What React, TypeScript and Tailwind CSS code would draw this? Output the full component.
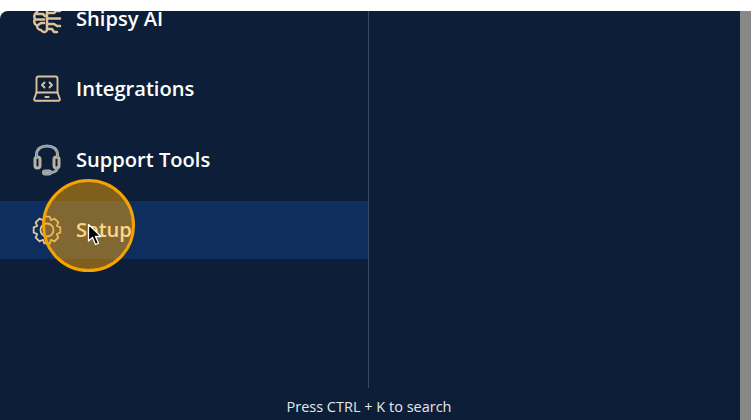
const items = [
  { label: "Shipsy AI", icon: <BrainIcon /> },
  { label: "Integrations", icon: <LaptopIcon /> },
  { label: "Support Tools", icon: <HeadsetIcon /> },
  { label: "Setup", icon: <GearIcon />, active: true },
];

function BrainIcon() {
  return (
    <svg width="30" height="30" viewBox="0 0 30 30" fill="none" stroke="#dcc29c" strokeWidth="2.500" strokeLinecap="round" strokeLinejoin="round">
      <path d="M15 4H9.500C7 4 5 6 5 8.500 2.500 9.500 1.500 12.500 3 15c-1.500 2.500-.5 5.500 2 6.500C5 24 7 26 9 26c1 2 3.500 2.500 5 1.500 1-.5 1-1.500 1-2.500V4z" />
      <path d="M5 10h6l2 2M4 15.500h8M6 21l3-2 3 0" />
      <path d="M15 9h7l2-2h4M15 14.500h13M15 20h7l3 2h3M15 25h5l2 3h3" />
    </svg>
  );
}

function LaptopIcon() {
  return (
    <svg width="30" height="30" viewBox="0 0 30 30" fill="none" stroke="#dcc29c" strokeWidth="1.900" strokeLinecap="round" strokeLinejoin="round">
      <path d="M4.500 19V4.500a2 2 0 0 1 2-2h17a2 2 0 0 1 2 2V19" />
      <path d="M4.500 18.500h21l2.200 6a1.500 1.500 0 0 1-1.400 2.300H3.700a1.500 1.500 0 0 1-1.400-2.300z" />
      <path d="M12.500 8.500 10 11l2.500 2.500M17.500 8.500 20 11l-2.500 2.500" />
      <path d="M13.500 23h3" strokeWidth="2.200" />
    </svg>
  );
}

function HeadsetIcon() {
  return (
    <svg width="30" height="32" viewBox="0 0 30 32" fill="none" strokeLinecap="round" strokeLinejoin="round">
      <g stroke="#b5b1a3" strokeWidth="3">
        <path d="M4.500 13v-2C4.500 5 9 2 15 2s10.500 3 10.500 9v2" />
        <rect x="3" y="13" width="5" height="11" rx="2.500" />
        <rect x="22" y="13" width="5" height="11" rx="2.500" />
        <path d="M25 24c0 3-3 4.500-6 4.500" />
        <rect x="11.500" y="27" width="7" height="3" rx="1.500" />
      </g>
      <g stroke="#6a9cc4" strokeWidth="1">
        <path d="M4.500 13v-2C4.500 5 9 2 15 2s10.500 3 10.500 9v2M25 24c0 3-3 4.500-6 4.500" />
        <rect x="11.500" y="27" width="7" height="3" rx="1.500" />
      </g>
    </svg>
  );
}

// 8 tooth gear, worked out once from polar points
function gearPath() {
  const pts: string[] = [];
  for (let i = 0; i < 8; i++) {
    const a = (i * Math.PI) / 4 - Math.PI / 2;
    [
      [10.600, -0.390],
      [13.600, -0.200],
      [13.600, 0.200],
      [10.600, 0.390],
    ].forEach(([r, d]) => {
      pts.push(`${(15 + r * Math.cos(a + d)).toFixed(2)} ${(15 + r * Math.sin(a + d)).toFixed(2)}`);
    });
  }
  return "M" + pts.join("L") + "Z";
}

function GearIcon() {
  return (
    <svg width="30" height="30" viewBox="0 0 30 30" fill="none" stroke="#e0c69c" strokeWidth="1.800" strokeLinecap="round" strokeLinejoin="round">
      <path d={gearPath()} />
      <circle cx="15" cy="15" r="6.500" />
    </svg>
  );
}

export default function App() {
  return (
    <div className="relative flex h-[420px] w-[751px] flex-col overflow-hidden bg-white pt-[11px] font-['Open_Sans','Noto_Sans',sans-serif]">
      <div className="flex min-h-0 flex-1">
        <div className="flex min-w-0 flex-1 flex-col overflow-hidden rounded-tl-lg bg-[#0d1f38]">
          <div className="flex min-h-0 flex-1">
            <nav className="w-[369px] overflow-hidden border-r border-[#3a4a60]">
              <div className="mt-[-21.25px] flex flex-col gap-[12.5px]">
                {items.map((item) => (
                  <div
                    key={item.label}
                    className={`flex h-[58px] shrink-0 items-center gap-[14px] pl-[32px] ${item.active ? "bg-[#0f2e60]" : ""}`}
                  >
                    <span className="flex w-[30px] justify-center">{item.icon}</span>
                    <span className="text-[20.1px] font-semibold leading-none text-white">{item.label}</span>
                  </div>
                ))}
              </div>
            </nav>
          </div>
          <div className="flex h-[32px] shrink-0 items-center justify-center pr-[2px] pt-[5px]">
            <span className="text-[14.5px] text-[#e5e7eb]">Press CTRL + K to search</span>
          </div>
        </div>
        <div className="w-[11px] shrink-0 bg-[#888888]" />
      </div>

      {/* click highlight */}
      <div className="absolute left-[42px] top-[179px] h-[93px] w-[93px] rounded-full border-[3px] border-[#f5a300] bg-[#ffa500]/48" />
      <svg className="absolute left-[87px] top-[223px]" width="16" height="24" viewBox="0 0 16 24">
        <path d="M1.500 1.500V18l4-3.500 3 7 3-1.300-3-6.700H14z" fill="#000" stroke="#fff" strokeWidth="1.300" strokeLinejoin="round" />
      </svg>
    </div>
  );
}
